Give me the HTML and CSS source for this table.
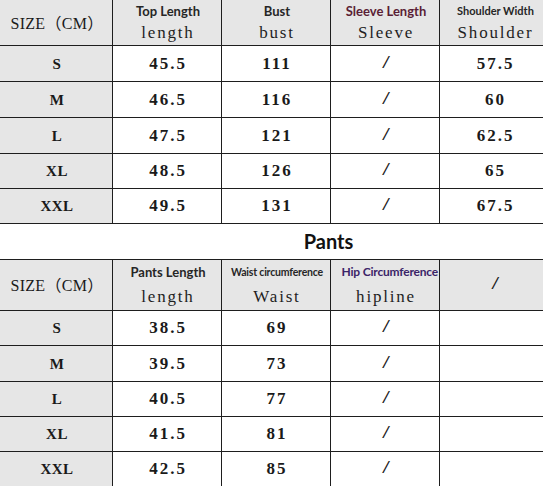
FILE: index.html
```html
<!DOCTYPE html>
<html>
<head>
<meta charset="utf-8">
<link rel="stylesheet" href="styles.css">
</head>
<body>
<div class="sheet">
  <table class="chart chart-top">
    <colgroup><col class="c1"><col class="c2"><col class="c3"><col class="c4"><col class="c5"></colgroup>
    <tr class="head">
      <td class="size">SIZE<span class="cjk">（</span>CM<span class="cjk">）</span></td>
      <td><span class="lbl">Top Length</span><span class="word">length</span></td>
      <td><span class="lbl">Bust</span><span class="word">bust</span></td>
      <td><span class="lbl lbl-sleeve">Sleeve Length</span><span class="word">Sleeve</span></td>
      <td><span class="lbl lbl-shoulder">Shoulder Width</span><span class="word">Shoulder</span></td>
    </tr>
    <tr class="r36"><td class="sz">S</td><td>45.5</td><td>111</td><td class="sl">/</td><td>57.5</td></tr>
    <tr class="r36"><td class="sz">M</td><td>46.5</td><td>116</td><td class="sl">/</td><td>60</td></tr>
    <tr class="r36"><td class="sz">L</td><td>47.5</td><td>121</td><td class="sl">/</td><td>62.5</td></tr>
    <tr class="r35"><td class="sz">XL</td><td>48.5</td><td>126</td><td class="sl">/</td><td>65</td></tr>
    <tr class="r35"><td class="sz">XXL</td><td>49.5</td><td>131</td><td class="sl">/</td><td>67.5</td></tr>
  </table>
  <div class="title">Pants</div>
  <table class="chart chart-pants">
    <colgroup><col class="c1"><col class="c2"><col class="c3"><col class="c4"><col class="c5"></colgroup>
    <tr class="head">
      <td class="size">SIZE<span class="cjk">（</span>CM<span class="cjk">）</span></td>
      <td><span class="lbl">Pants Length</span><span class="word">length</span></td>
      <td><span class="lbl lbl-waist">Waist circumference</span><span class="word">Waist</span></td>
      <td><span class="lbl lbl-hip">Hip Circumference</span><span class="word">hipline</span></td>
      <td class="size sl">/</td>
    </tr>
    <tr class="r35"><td class="sz">S</td><td>38.5</td><td>69</td><td class="sl">/</td><td></td></tr>
    <tr class="r36"><td class="sz">M</td><td>39.5</td><td>73</td><td class="sl">/</td><td></td></tr>
    <tr class="r35"><td class="sz">L</td><td>40.5</td><td>77</td><td class="sl">/</td><td></td></tr>
    <tr class="r35"><td class="sz">XL</td><td>41.5</td><td>81</td><td class="sl">/</td><td></td></tr>
    <tr class="r35"><td class="sz">XXL</td><td>42.5</td><td>85</td><td class="sl">/</td><td></td></tr>
  </table>
</div>
</body>
</html>
```
FILE: styles.css
```css
html, body {
  margin: 0;
  padding: 0;
  background: #fff;
  overflow: hidden;
}
.sheet {
  width: 543px;
  height: 486px;
  overflow: hidden;
}
.chart {
  border-collapse: collapse;
  table-layout: fixed;
  width: 550px;
  margin-left: -1px;
  font-family: "Liberation Serif", "DejaVu Serif", serif;
  color: #1a1a1a;
}
.chart-top { margin-top: -1px; }
.c1 { width: 113px; }
.c2, .c3, .c4 { width: 109px; }
.c5 { width: 110px; }
.chart td {
  border: 1px solid #1e1e1e;
  padding: 0 0 0 2px;
  text-align: center;
  vertical-align: middle;
  font-size: 17px;
  font-weight: bold;
  letter-spacing: 2px;
  line-height: 18px;
  background: #fff;
}
.chart td.sz {
  font-size: 15px;
  letter-spacing: 0.5px;
}
.chart td.sz, .chart .head td {
  background: #e6e6e6;
}
.chart td.sl {
  font-weight: normal;
  font-family: "Liberation Mono", monospace;
  font-size: 16px;
  letter-spacing: 0;
}
.chart-top .head td { height: 45px; }
.chart-pants .head td { height: 50px; }
.r36 td { height: 35px; }
.r35 td { height: 34px; }
.head td.size {
  font-weight: normal;
  font-size: 16px;
  letter-spacing: 0.3px;
  font-family: "Liberation Serif", serif;
}
.head td.size.sl {
  font-family: "Liberation Mono", monospace;
}
.cjk {
  font-family: "Noto Sans CJK SC", sans-serif;
  font-weight: normal;
}
.head .lbl {
  display: block;
  font-family: Lato, "Open Sans", sans-serif;
  font-weight: bold;
  font-size: 13px;
  letter-spacing: 0;
  line-height: 16px;
  color: #262626;
  white-space: nowrap;
}
.head .word {
  display: block;
  font-weight: normal;
  font-size: 17px;
  letter-spacing: 1.8px;
  line-height: 20px;
  color: #1e1e1e;
  margin-top: 4px;
}
.chart-pants .head .word { margin-top: 7px; }
.head .lbl-sleeve { color: #5a1e35; }
.head .lbl-shoulder { font-size: 11px; }
.head .lbl-waist { font-size: 10.5px; letter-spacing: -0.2px; }
.head .lbl-hip { color: #3b2468; font-size: 12px; letter-spacing: -0.2px; text-align: right; padding-right: 1px; }
.title {
  height: 35px;
  padding-left: 114px;
  text-align: center;
  font-family: Lato, "Open Sans", sans-serif;
  font-weight: bold;
  font-size: 20px;
  line-height: 35px;
  color: #111;
}
```
